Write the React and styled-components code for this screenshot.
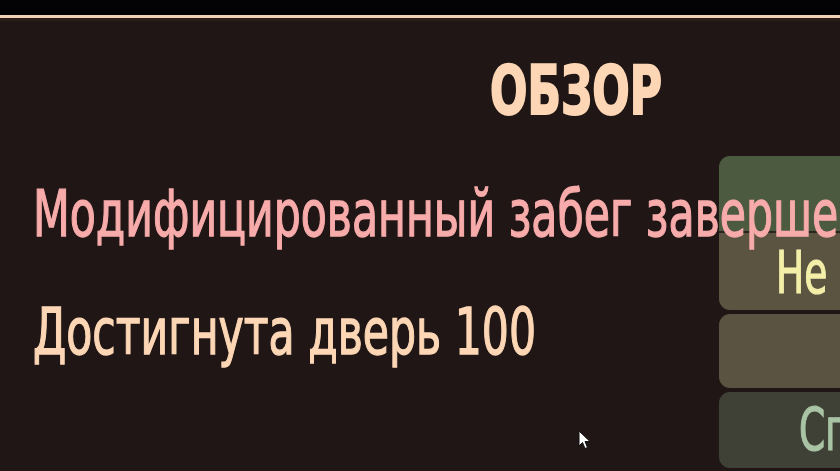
import React from 'react';
import styled, { createGlobalStyle } from 'styled-components';

const GlobalStyle = createGlobalStyle`
  html, body {
    margin: 0;
    padding: 0;
    background: #1f1615;
    overflow: hidden;
  }
`;

const Page = styled.div`
  position: relative;
  width: 840px;
  height: 471px;
  overflow: hidden;
  display: flex;
  flex-direction: column;
  background: #1f1615;
  font-family: "DejaVu Sans Condensed", "DejaVu Sans", sans-serif;
  font-stretch: condensed;
`;

const TopBar = styled.div`
  height: 15px;
  background: #030306;
  border-bottom: 3px solid #f3cfb4;
  box-shadow: 0 3px 0 #2c1d17;
  flex: none;
`;

const Main = styled.div`
  display: flex;
  flex: 1;
  margin-top: 3px;
`;

const Content = styled.div`
  position: relative;
  z-index: 1;
  width: 719px;
  flex: none;
  display: flex;
  flex-direction: column;
  padding-top: 36px;
`;

const Title = styled.h1`
  margin: 0 0 0 490px;
  font-size: 68px;
  line-height: 68px;
  font-weight: 700;
  color: #fdd7b5;
  -webkit-text-stroke: 2px #fdd7b5;
  white-space: nowrap;
  transform: scaleX(0.72);
  transform-origin: left top;
`;

const Line = styled.div`
  margin-top: ${({ $gap }) => $gap}px;
  margin-left: 33px;
  font-size: 64px;
  line-height: 64px;
  color: ${({ $color }) => $color};
  -webkit-text-stroke: 1.3px ${({ $color }) => $color};
  white-space: nowrap;
  transform: scaleX(0.74);
  transform-origin: left top;
`;

const Side = styled.div`
  width: 220px;
  flex: none;
  display: flex;
  flex-direction: column;
  gap: 4px;
  padding-top: 135px;
`;

const Button = styled.div`
  height: ${({ $h }) => $h}px;
  border-radius: 11px;
  background: ${({ $bg }) => $bg};
  display: flex;
  align-items: ${({ $align }) => $align || 'center'};
  padding-left: ${({ $pad }) => $pad}px;
  box-sizing: border-box;
`;

const ButtonLabel = styled.span`
  font-size: 58px;
  line-height: 58px;
  color: ${({ $color }) => $color};
  -webkit-text-stroke: 1.2px ${({ $color }) => $color};
  white-space: nowrap;
  transform: scaleX(0.72);
  transform-origin: left center;
  display: inline-block;
`;

const Cursor = styled.svg`
  position: absolute;
  left: 578px;
  top: 430px;
  width: 14px;
  height: 21px;
`;

export default function App() {
  return (
    <>
      <GlobalStyle />
      <Page>
        <TopBar />
        <Main>
          <Content>
            <Title>ОБЗОР</Title>
            <Line $gap={57} $color="#f7abaa">Модифицированный забег завершен</Line>
            <Line $gap={54} $color="#fdd7b5">Достигнута дверь 100</Line>
          </Content>
          <Side>
            <Button
              $h={154}
              $pad={57}
              $align="flex-end"
              $bg="linear-gradient(to bottom, #4c5a40 0, #4c5a40 75px, #2a2520 75px, #2a2520 77px, #5b5441 77px)"
            >
              <ButtonLabel $color="#f3efa9" style={{ marginBottom: 8 }}>Не</ButtonLabel>
            </Button>
            <Button $h={74} $pad={57} $bg="#5a5341" />
            <Button $h={76} $pad={80} $bg="#3f4137">
              <ButtonLabel $color="#a9c4a4">Сгенерировать</ButtonLabel>
            </Button>
          </Side>
        </Main>
        <Cursor viewBox="0 0 14 21">
          <path d="M1 1 L1 16 L4.5 12.5 L7 18.5 L9.5 17.5 L7 11.5 L12 11.5 Z" fill="#ffffff" stroke="#111" strokeWidth="1" />
        </Cursor>
      </Page>
    </>
  );
}
